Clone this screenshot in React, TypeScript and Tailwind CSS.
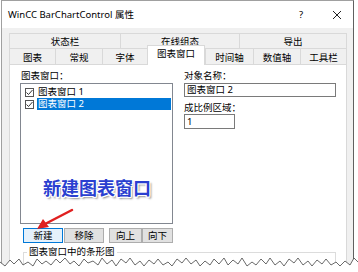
import React from "react";

const tear =
  "0,262 5,266 10,260 14,264 19,259 23,265 28,262 33,266 37,259 42,264 46,261 51,265 56,259 60,263 65,258 70,264 74,261 79,266 84,259 88,263 93,261 98,265 102,258 107,264 112,260 116,266 121,259 126,263 130,258 135,265 140,261 144,266 149,260 154,264 158,259 163,265 168,262 172,266 177,259 182,263 186,258 191,264 196,260 200,266 205,261 210,265 214,259 219,264 224,258 228,265 233,260 238,264 242,258 247,266 252,262 256,265 261,259 266,264 270,258 275,265 280,261 284,266 289,259 294,263 298,258 303,265 308,261 312,266 317,260 322,264 326,259 331,265 336,262 340,266 345,261 350,265 354,258 358,262";

function Check() {
  return (
    <div className="w-[9px] h-[9px] border border-[#555] bg-white flex items-center justify-center">
      <svg width="7" height="7" viewBox="0 0 7 7">
        <polyline points="0.5,3.5 2.5,5.5 6.5,1" fill="none" stroke="#333" strokeWidth="1" />
      </svg>
    </div>
  );
}

function Btn({ w, label, focused }: { w: string; label: string; focused?: boolean }) {
  return (
    <div
      className={
        "h-[15px] flex items-center justify-center border " +
        w +
        (focused ? " border-[#0078d7] bg-[#e5f1fb]" : " border-[#adadad] bg-[#e1e1e1]")
      }
    >
      {label}
    </div>
  );
}

export default function App() {
  const row2 = [
    { l: "图表", w: "w-[46px]" },
    { l: "常规", w: "w-[47px]" },
    { l: "字体", w: "w-[45px]" },
    { l: "图表窗口", w: "w-[58px]", sel: true },
    { l: "时间轴", w: "w-[48px]" },
    { l: "数值轴", w: "w-[47px]" },
    { l: "工具栏", w: "w-[47px]", last: true },
  ];
  return (
    <div
      className="w-[358px] h-[272px] bg-white relative overflow-hidden text-[9.5px] leading-[12px] text-black"
      style={{ fontFamily: "'Noto Sans', 'Noto Sans CJK SC', sans-serif" }}
    >
      <div className="ml-[1px] w-[353px] h-[272px] border-l border-t border-r border-l-[#a0a0a0] border-t-[#a0a0a0] border-r-[#606060] flex flex-col overflow-hidden">
        {/* title bar */}
        <div className="h-[27px] shrink-0 bg-white flex items-center pl-[6px] pt-[1px] text-[9.5px]">
          <span className="flex-1">WinCC BarChartControl 属性</span>
          <span className="w-[10px] text-center mr-[26px]">?</span>
          <svg width="10" height="10" viewBox="0 0 10 10" className="mr-[11px]">
            <path d="M1 1 L9 9 M9 1 L1 9" stroke="#222" strokeWidth="1" />
          </svg>
        </div>
        {/* body */}
        <div className="flex-1 min-h-0 bg-[#f0f0f0] pl-[7px] pr-[6px] pt-[5px] flex flex-col">
          <div className="flex h-[15px] shrink-0">
            <div className="w-[111px] border-l border-t border-[#d9d9d9] flex items-center justify-center pt-[1px]">状态栏</div>
            <div className="w-[119px] border-l border-t border-[#d9d9d9] flex items-center justify-center pt-[1px]">在线组态</div>
            <div className="w-[108px] border-l border-t border-r border-[#d9d9d9] flex items-center justify-center pt-[1px]">导出</div>
          </div>
          <div className="flex h-[16px] shrink-0">
            {row2.map((t) =>
              t.sel ? (
                <div
                  key={t.l}
                  className={
                    t.w +
                    " relative z-10 h-[20px] -mt-[3px] bg-white border-l border-t border-r border-[#d9d9d9] flex justify-center pt-[2px]"
                  }
                >
                  {t.l}
                </div>
              ) : (
                <div
                  key={t.l}
                  className={
                    t.w +
                    " h-full border-l border-t border-[#d9d9d9] flex items-center justify-center pt-[2px]" +
                    (t.last ? " border-r" : "")
                  }
                >
                  {t.l}
                </div>
              )
            )}
          </div>
          {/* panel */}
          <div className="h-[220px] shrink-0 bg-white border border-[#d9d9d9] pt-[5px] pl-[10px] flex">
            <div className="w-[153px] flex flex-col shrink-0">
              <div className="pl-[1px] h-[12px] shrink-0">图表窗口：</div>
              <div className="mt-[1px] h-[141px] shrink-0 border border-[#828790] bg-white pt-[2px] pl-[4px] pr-[1px]">
                <div className="flex items-center h-[12px] gap-[3px]">
                  <Check />
                  <span className="pl-[1px]">图表窗口 1</span>
                </div>
                <div className="flex items-center h-[12px] gap-[3px]">
                  <Check />
                  <span className="flex-1 h-[12px] bg-[#0078d7] text-white pl-[1px]">图表窗口 2</span>
                </div>
              </div>
              <div className="flex mt-[4px] pl-[3px] shrink-0">
                <Btn w="w-[40px]" label="新建" focused />
                <div className="w-[1px]" />
                <Btn w="w-[40px]" label="移除" />
                <div className="w-[5px]" />
                <Btn w="w-[33px]" label="向上" />
                <Btn w="w-[31px]" label="向下" />
              </div>
              <div className="mt-[9px] ml-[3px] w-[313px] h-[30px] shrink-0 border-l border-t border-r border-[#dcdcdc] relative">
                <span className="absolute left-[3px] -top-[7px] bg-white px-[2px]">图表窗口中的条形图</span>
              </div>
            </div>
            <div className="ml-[11px] flex flex-col">
              <div className="h-[12px]">对象名称：</div>
              <div className="mt-[1px] w-[152px] h-[14px] border border-[#7a7a7a] flex items-center pl-[2px]">图表窗口 2</div>
              <div className="mt-[5px] h-[11px] leading-[11px]">成比例区域：</div>
              <div className="mt-[1px] w-[51px] h-[15px] border border-[#7a7a7a] flex items-center pl-[2px]">1</div>
            </div>
          </div>
        </div>
      </div>

      {/* callout text */}
      <div
        className="absolute left-[43px] top-[176px] text-[18px] leading-[22px] font-bold text-[#2a3fd0] [text-shadow:1px_0_0_#fff,-1px_0_0_#fff,0_1px_0_#fff,0_-1px_0_#fff,1px_1px_0_#fff,-1px_-1px_0_#fff,1px_-1px_0_#fff,-1px_1px_0_#fff,2px_2px_2px_rgba(0,0,0,0.45)]"
        style={{ fontFamily: "'Noto Sans CJK SC', sans-serif" }}
      >
        新建图表窗口
      </div>

      {/* red arrow */}
      <svg className="absolute left-[30px] top-[204px]" width="50" height="30" viewBox="0 0 50 30">
        <line x1="42" y1="6" x2="15" y2="20" stroke="#e02020" strokeWidth="2.5" strokeLinecap="round" />
        <polygon points="7,25 13,15 19,23" fill="#e02020" />
      </svg>

      {/* torn edge */}
      <svg className="absolute left-0 top-0" width="358" height="272" viewBox="0 0 358 272">
        <polygon points={tear + " 358,272 0,272"} fill="#fff" />
        <polyline points={tear} fill="none" stroke="#444" strokeWidth="0.8" />
      </svg>
    </div>
  );
}
